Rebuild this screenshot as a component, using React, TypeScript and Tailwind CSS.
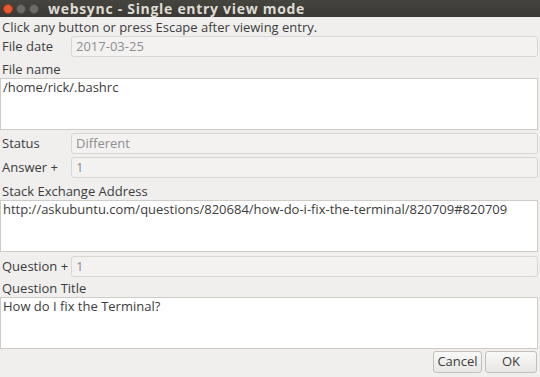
import {ReactNode} from "react"

const font = {fontFamily: '"Open Sans", "DejaVu Sans", sans-serif'}

const Row = ({label, value, top}: {label: string; value: string; top: string}) => (
  <div className={`flex flex-row items-center h-[21px] ${top}`}>
    <div className="w-[71px] pl-[2px] text-[#3c3c3c]">{label}</div>
    <div className="flex-1 h-full mr-[2px] rounded-[3px] border border-[#d9d7d3] bg-[#f3f2f1] px-[4px] flex items-center text-[#8e8e8e]">
      {value}
    </div>
  </div>
)

const Area = ({children}: {children: ReactNode}) => (
  <div className="h-[52px] mr-[2px] border border-[#cfccc7] bg-white px-[2px] leading-[16px] text-[#3c3c3c]">
    {children}
  </div>
)

const Label = ({text, height}: {text: string; height: string}) => (
  <div className={`${height} pl-[2px] flex items-end pb-[1px] text-[#3c3c3c] leading-[16px]`}>{text}</div>
)

const App = () => {
  return (
    <div className="w-[540px] h-[377px] bg-[#f0efee] text-[13px] overflow-hidden flex flex-col" style={font}>
      <div className="h-[17px] shrink-0 bg-gradient-to-b from-[#45443f] to-[#3a3935] flex flex-row items-center gap-[3px] pl-[3px]">
        <div className="w-[10px] h-[10px] rounded-full bg-[#e9572c] border border-[#a83c1d]"></div>
        <div className="w-[10px] h-[10px] rounded-full bg-[#6c6b66] border border-[#4d4c48]"></div>
        <div className="w-[10px] h-[10px] rounded-full bg-[#6c6b66] border border-[#4d4c48]"></div>
        <div className="ml-[6px] font-bold text-[#dfdbd2] text-[14px] tracking-[0.7px] leading-[17px]">
          websync - Single entry view mode
        </div>
      </div>
      <div className="h-[19px] pl-[2px] flex items-center text-[#3c3c3c] leading-[16px]">
        Click any button or press Escape after viewing entry.
      </div>
      <Row label="File date" value="2017-03-25" top="mt-0" />
      <Label text="File name" height="h-[21px]" />
      <Area>/home/rick/.bashrc</Area>
      <Row label="Status" value="Different" top="mt-[3px]" />
      <Row label="Answer +" value="1" top="mt-[3px]" />
      <Label text="Stack Exchange Address" height="h-[22px]" />
      <Area>http://askubuntu.com/questions/820684/how-do-i-fix-the-terminal/820709#820709</Area>
      <Row label="Question +" value="1" top="mt-[4px]" />
      <Label text="Question Title" height="h-[20px]" />
      <Area>How do I fix the Terminal?</Area>
      <div className="flex flex-row justify-end gap-[3px] mt-[2px] mr-[3px]">
        <button className="w-[49px] h-[22px] rounded-[3px] border border-[#c4c1bb] bg-gradient-to-b from-[#f8f8f7] to-[#e8e7e5] text-[#3c3c3c]">
          Cancel
        </button>
        <button className="w-[52px] h-[22px] rounded-[3px] border border-[#c4c1bb] bg-gradient-to-b from-[#f8f8f7] to-[#e8e7e5] text-[#3c3c3c]">
          OK
        </button>
      </div>
    </div>
  )
}

export default App
